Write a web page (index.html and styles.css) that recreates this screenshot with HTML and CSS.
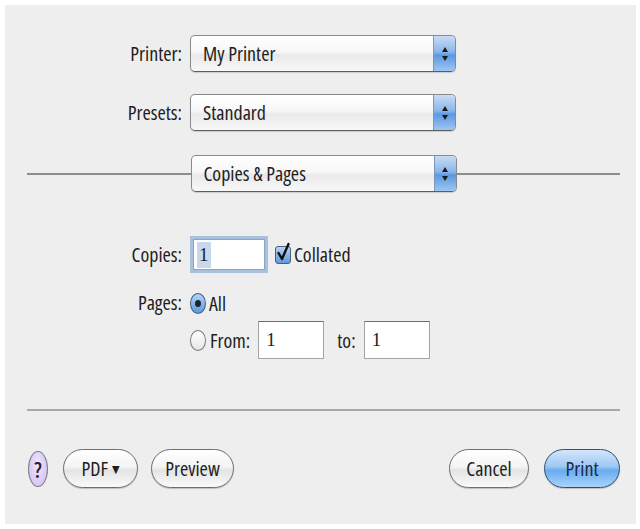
FILE: index.html
```html
<!DOCTYPE html>
<html>
<head>
<meta charset="utf-8">
<link rel="stylesheet" href="styles.css">
</head>
<body>
<div class="panel">
  <div class="form top-form">
    <span class="label">Printer:</span>
    <div class="popup"><span class="popup-text">My Printer</span><span class="arrows"><svg width="8" height="16" viewBox="0 0 8 16"><path d="M4 1 L7 6 L1 6 Z M1 10 L7 10 L4 15 Z" fill="#1a1a1a"/></svg></span></div>
    <span class="label">Presets:</span>
    <div class="popup"><span class="popup-text">Standard</span><span class="arrows"><svg width="8" height="16" viewBox="0 0 8 16"><path d="M4 1 L7 6 L1 6 Z M1 10 L7 10 L4 15 Z" fill="#1a1a1a"/></svg></span></div>
  </div>

  <div class="section-row">
    <div class="rule"></div>
    <div class="popup"><span class="popup-text">Copies &amp; Pages</span><span class="arrows"><svg width="8" height="16" viewBox="0 0 8 16"><path d="M4 1 L7 6 L1 6 Z M1 10 L7 10 L4 15 Z" fill="#1a1a1a"/></svg></span></div>
    <div class="rule"></div>
  </div>

  <div class="form copies-form">
    <span class="label">Copies:</span>
    <div class="copies-line">
      <div class="field focus"><span class="sel">1</span></div>
      <span class="checkbox"><svg width="18" height="22" viewBox="0 0 18 22"><path d="M3.5 11 L7 17 L13.5 2" fill="none" stroke="#111" stroke-width="2.4" stroke-linejoin="round" stroke-linecap="round"/></svg></span>
      <span class="text">Collated</span>
    </div>
    <span class="label pages-label">Pages:</span>
    <div class="pages-group">
      <div class="radio-line all-line"><span class="radio on"></span><span class="text">All</span></div>
      <div class="radio-line from-line"><span class="radio"></span><span class="text">From:</span><div class="field small">1</div><span class="text to">to:</span><div class="field small">1</div></div>
    </div>
  </div>

  <div class="separator"></div>

  <div class="buttons">
    <div class="btn-group">
      <span class="help">?</span>
      <span class="btn pdf">PDF <span class="tri">&#9660;</span></span>
      <span class="btn preview">Preview</span>
    </div>
    <div class="btn-group">
      <span class="btn cancel">Cancel</span>
      <span class="btn print">Print</span>
    </div>
  </div>
</div>
</body>
</html>
```

FILE: styles.css
```css
* { box-sizing: border-box; }

html, body {
  margin: 0;
  padding: 0;
  background: #ffffff;
}

body {
  font-family: "Open Sans", "DejaVu Sans Condensed", sans-serif;
  font-stretch: 75%;
  font-size: 20px;
  color: #1e1e1e;
}

.panel {
  margin: 5px 4px 0 5px;
  height: 519px;
  background: #eeeeee;
  padding-top: 30px;
  display: flex;
  flex-direction: column;
}

.form {
  display: grid;
  grid-template-columns: 178px auto;
  column-gap: 7px;
  align-items: center;
  justify-content: start;
}

.top-form {
  row-gap: 22px;
}

.label {
  text-align: right;
  padding-right: 1px;
}

.popup {
  width: 266px;
  height: 37px;
  border: 1px solid #8a8a8a;
  border-bottom-color: #5e5e5e;
  border-radius: 5px;
  background: linear-gradient(#ffffff 0%, #f7f7f7 45%, #e9e9e9 55%, #f8f8f8 100%);
  display: flex;
  align-items: center;
  overflow: hidden;
  box-shadow: 0 1px 1px rgba(0,0,0,0.15);
}

.popup-text {
  flex: 1;
  padding-left: 12px;
}

.arrows {
  width: 22px;
  height: 100%;
  background: linear-gradient(#c8dcf4 0%, #8ab6ea 45%, #5d98e0 55%, #9cc6f2 100%);
  border-left: 1px solid #7b97ba;
  display: flex;
  align-items: center;
  justify-content: center;
}

.section-row {
  margin-top: 24px;
  padding: 0 16px 0 22px;
  display: flex;
  align-items: center;
}

.rule {
  flex: 1;
  height: 2px;
  background: #8c8c8c;
}

.copies-form {
  margin-top: 44px;
  row-gap: 18px;
  align-items: start;
}

.copies-form .label {
  align-self: center;
}

.copies-form .pages-label {
  align-self: start;
  line-height: 24px;
}

.copies-line {
  display: flex;
  align-items: center;
}

.field {
  background: #ffffff;
  border: 1px solid #a3a3a3;
  border-top-color: #6e6e6e;
  padding-left: 7px;
  display: flex;
  align-items: center;
  font-family: "Liberation Serif", serif;
  font-stretch: normal;
  font-size: 19px;
}

.field.focus {
  width: 78px;
  height: 37px;
  border: 3px solid #a8c1dc;
  box-shadow: inset 0 0 0 1px #8aa4c2;
  padding-left: 4px;
}

.sel {
  background: #c7d9ef;
  padding: 2px 2px;
}

.checkbox {
  position: relative;
  width: 16px;
  height: 18px;
  margin-left: 7px;
  border: 1px solid #4a5e78;
  border-radius: 3px;
  background: linear-gradient(#b9d3f2, #5f97dc);
}

.checkbox svg {
  position: absolute;
  left: -1px;
  top: -5px;
}

.copies-line .text {
  margin-left: 3px;
}

.pages-group {
  display: flex;
  flex-direction: column;
  gap: 6px;
}

.radio-line {
  display: flex;
  align-items: center;
}

.all-line {
  height: 24px;
}

.radio {
  width: 16px;
  height: 21px;
  border-radius: 50%;
  border: 1px solid #7a7a7a;
  background: linear-gradient(#ffffff, #e6e6e6);
  position: relative;
}

.radio.on {
  border-color: #3e5f88;
  background: linear-gradient(#b8d4f4, #5e97dd);
}

.radio.on::after {
  content: "";
  position: absolute;
  left: 4px;
  top: 6px;
  width: 6px;
  height: 7px;
  border-radius: 50%;
  background: #1d2733;
}

.radio-line .text {
  margin-left: 3px;
}

.from-line .text {
  margin-left: 4px;
}

.field.small {
  width: 66px;
  height: 38px;
  margin-left: 8px;
}

.from-line .to {
  margin-left: 13px;
}

.separator {
  margin: 50px 16px 0 22px;
  height: 2px;
  background: #a8a8a8;
}

.buttons {
  margin-top: 38px;
  padding: 0 16px 0 23px;
  display: flex;
  justify-content: space-between;
  align-items: center;
}

.btn-group {
  display: flex;
  align-items: center;
  gap: 13px;
}

.help {
  width: 20px;
  height: 36px;
  border-radius: 50%;
  border: 1px solid #7c7c8c;
  background: radial-gradient(ellipse at 50% 40%, #f1e8ff, #cdb9ee);
  display: flex;
  align-items: center;
  justify-content: center;
  font-weight: 600;
  color: #2a2238;
  font-size: 22px;
  margin-right: 2px;
}

.btn {
  height: 39px;
  border: 1px solid #6e6e6e;
  border-radius: 20px / 20px;
  background: linear-gradient(#ffffff 0%, #f4f4f4 45%, #e4e4e4 55%, #fafafa 100%);
  display: flex;
  align-items: center;
  justify-content: center;
  box-shadow: 0 1px 1px rgba(0,0,0,0.2);
}

.pdf { width: 75px; }
.preview { width: 83px; }
.cancel { width: 80px; }

.tri {
  font-size: 11px;
  margin-left: 4px;
}

.print {
  width: 76px;
  margin-left: 2px;
  border-color: #2f4e78;
  background: linear-gradient(#d4e6fb 0%, #9dc7f3 45%, #6aabef 55%, #a9d3fb 100%);
  color: #1a2a44;
}
```
